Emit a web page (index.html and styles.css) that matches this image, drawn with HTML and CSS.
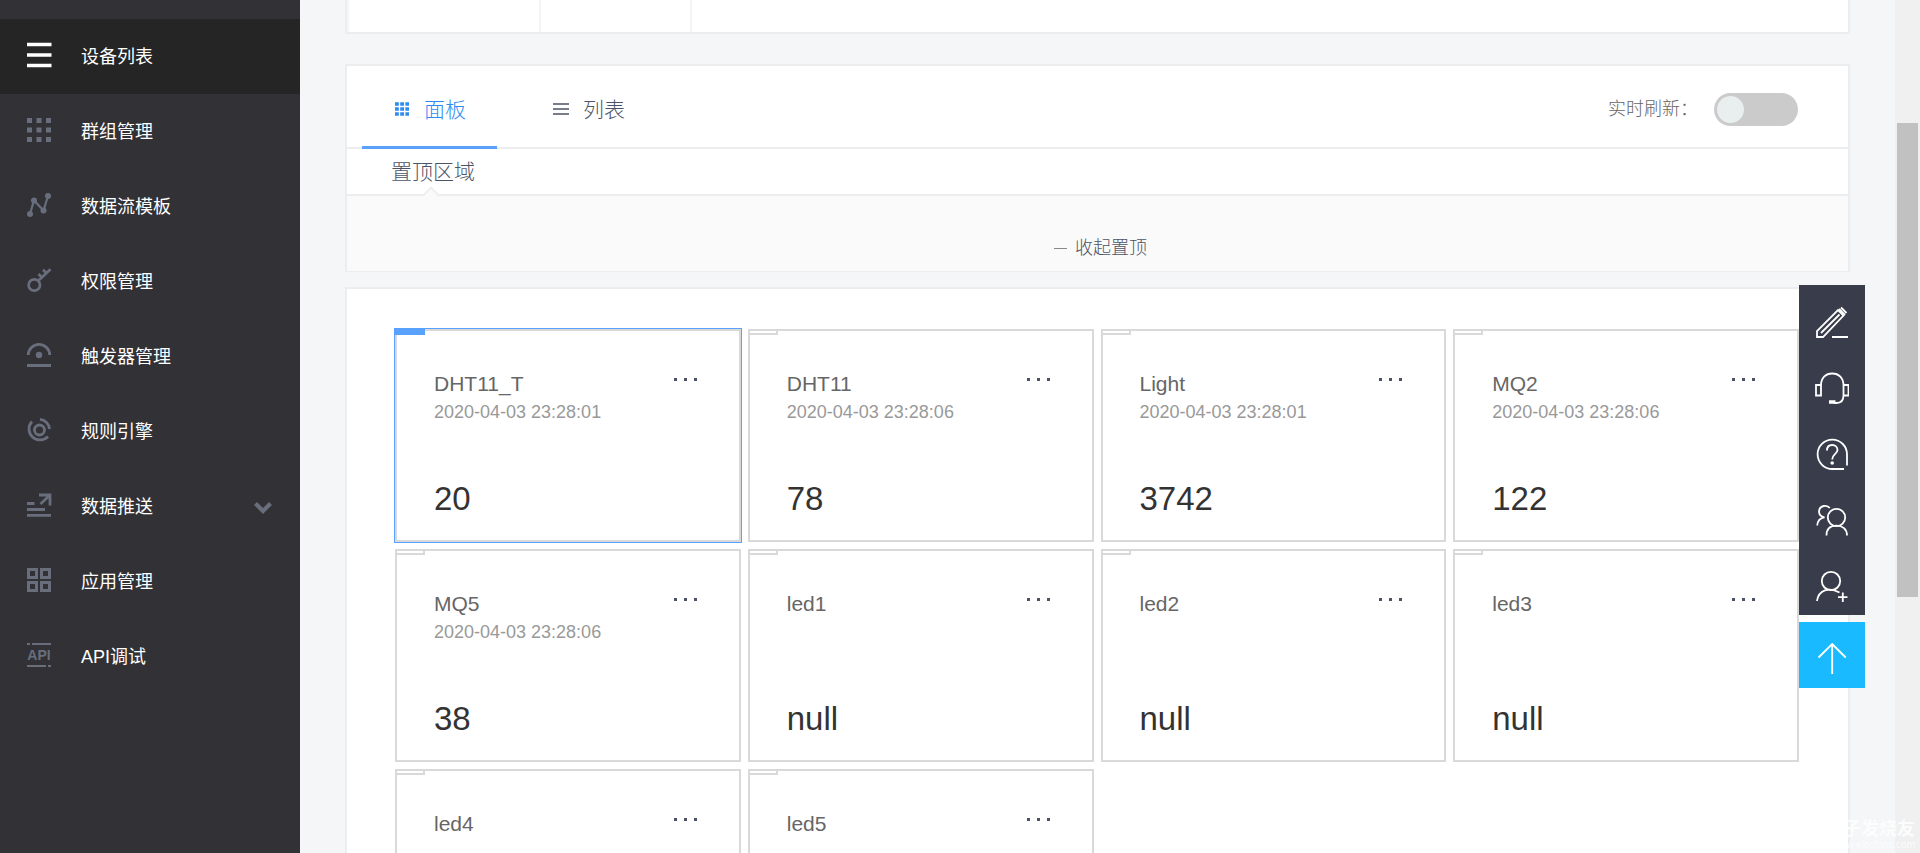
FILE: index.html
```
<!DOCTYPE html>
<html lang="zh-CN">
<head>
<meta charset="utf-8">
<title>设备列表</title>
<link rel="stylesheet" href="styles.css">
</head>
<body>
<div class="app">
  <nav class="sidebar">
    <a class="nav-item active" href="#"><svg class="nav-icon" viewBox="0 0 24 24"><path d="M0 1.500h24.500M0 12h24.500M0 22.500h24.500" stroke="currentColor" stroke-width="3.400"/></svg><span>设备列表</span></a>
    <a class="nav-item" href="#"><svg class="nav-icon" viewBox="0 0 24 24"><path d="M0 2.500h24M0 12h24M0 21.500h24" stroke="currentColor" stroke-width="5" stroke-dasharray="5 4.500"/></svg><span>群组管理</span></a>
    <a class="nav-item" href="#"><svg class="nav-icon" viewBox="0 0 24 24"><path d="M3 21L7 7.500L16.500 17.500L21 3" fill="none" stroke="currentColor" stroke-width="2.200"/><g fill="currentColor"><circle cx="3" cy="21" r="3"/><circle cx="7" cy="7.500" r="3"/><circle cx="16.500" cy="17.500" r="3"/><circle cx="21" cy="3" r="3"/></g></svg><span>数据流模板</span></a>
    <a class="nav-item" href="#"><svg class="nav-icon" viewBox="0 0 24 24"><g fill="none" stroke="currentColor" stroke-width="2.700"><circle cx="7.300" cy="17" r="5.700"/><path d="M11 13L23.500 1.200M16 1.800l4 4M11.500 6l4 4"/></g></svg><span>权限管理</span></a>
    <a class="nav-item" href="#"><svg class="nav-icon" viewBox="0 0 24 24"><path d="M1.300 12a10.700 10.700 0 0 1 21.400 0M0 22.500h24" fill="none" stroke="currentColor" stroke-width="2.800"/><circle cx="12" cy="12" r="3.200" fill="currentColor"/></svg><span>触发器管理</span></a>
    <a class="nav-item" href="#"><svg class="nav-icon" viewBox="0 0 24 24"><g fill="none" stroke="currentColor" stroke-width="2.800"><circle cx="12.500" cy="12" r="5"/><path d="M13 1.400A10.600 10.600 0 0 1 22.600 11M21 18.500A10.600 10.600 0 1 1 5 3.500"/></g></svg><span>规则引擎</span></a>
    <a class="nav-item" href="#"><svg class="nav-icon" viewBox="0 0 24 24"><path d="M0 10.500h7.500M0 16.500h18M0 22.300h24M12 2h11v10.500M22.500 2.500L13.500 11" fill="none" stroke="currentColor" stroke-width="2.800"/></svg><span>数据推送</span><svg class="nav-chevron" viewBox="0 0 18 12"><path d="M1.500 1.500L9 9l7.500-7.500" fill="none" stroke="currentColor" stroke-width="4.200"/></svg></a>
    <a class="nav-item" href="#"><svg class="nav-icon" viewBox="0 0 24 24"><path d="M1.500 1.500h8v8h-8zM14.500 1.500h8v8h-8zM1.500 14.500h8v8h-8zM14.500 14.500h8v8h-8z" fill="none" stroke="currentColor" stroke-width="3"/></svg><span>应用管理</span></a>
    <a class="nav-item" href="#"><svg class="nav-icon" viewBox="0 0 24 24"><path d="M0 1h3M5 1h19M0 23h19M21 23h3" stroke="currentColor" stroke-width="1.800"/><text class="api-mark" x="12" y="17">API</text></svg><span>API调试</span></a>
  </nav>

  <main class="content">
    <section class="panel summary"><div class="summary-a"></div><div class="summary-b"></div></section>

    <section class="panel board">
      <header class="tabs">
        <button class="tab selected" type="button"><svg class="tab-icon" viewBox="0 0 16 16"><path d="M1 3h14M1 8h14M1 13h14" stroke="currentColor" stroke-width="3.600" stroke-dasharray="3.800 1.400"/></svg>面板</button>
        <button class="tab" type="button"><svg class="tab-icon" viewBox="0 0 16 16"><path d="M0 3h16M0 8h16M0 13h16" stroke="currentColor" stroke-width="1.600"/></svg>列表</button>
        <label class="refresh">实时刷新：<input class="switch" type="checkbox"></label>
      </header>
      <h2 class="pinned-title">置顶区域</h2>
      <div class="pinned">
        <button class="collapse" type="button"><span class="minus"></span>收起置顶</button>
      </div>
    </section>

    <section class="panel cards">
      <article class="card current"><h3>DHT11_T</h3><button class="more" type="button" aria-label="更多"><i></i><i></i><i></i></button><time>2020-04-03 23:28:01</time><p>20</p></article>
      <article class="card"><h3>DHT11</h3><button class="more" type="button" aria-label="更多"><i></i><i></i><i></i></button><time>2020-04-03 23:28:06</time><p>78</p></article>
      <article class="card"><h3>Light</h3><button class="more" type="button" aria-label="更多"><i></i><i></i><i></i></button><time>2020-04-03 23:28:01</time><p>3742</p></article>
      <article class="card"><h3>MQ2</h3><button class="more" type="button" aria-label="更多"><i></i><i></i><i></i></button><time>2020-04-03 23:28:06</time><p>122</p></article>
      <article class="card"><h3>MQ5</h3><button class="more" type="button" aria-label="更多"><i></i><i></i><i></i></button><time>2020-04-03 23:28:06</time><p>38</p></article>
      <article class="card"><h3>led1</h3><button class="more" type="button" aria-label="更多"><i></i><i></i><i></i></button><time></time><p>null</p></article>
      <article class="card"><h3>led2</h3><button class="more" type="button" aria-label="更多"><i></i><i></i><i></i></button><time></time><p>null</p></article>
      <article class="card"><h3>led3</h3><button class="more" type="button" aria-label="更多"><i></i><i></i><i></i></button><time></time><p>null</p></article>
      <article class="card"><h3>led4</h3><button class="more" type="button" aria-label="更多"><i></i><i></i><i></i></button></article>
      <article class="card"><h3>led5</h3><button class="more" type="button" aria-label="更多"><i></i><i></i><i></i></button></article>
    </section>
  </main>

  <div class="scrollbar"><div class="thumb"></div></div>

  <aside class="tools">
    <button class="tool" type="button" aria-label="反馈"><svg viewBox="0 0 34 34"><path d="M2 31v-6L23 4l5.500 5.500L8 31zM6 27L24.500 8.500M17 31h16" /><path d="M24 3l6 6M26 1.500l5.500 5.500" /></svg></button>
    <button class="tool" type="button" aria-label="客服"><svg viewBox="0 0 34 34"><path d="M1 13h5v10.500H1zM28.500 13h5v10.500h-5zM6 13.500C6 6 10.500 1.500 17.200 1.500S28.500 6 28.500 13.500M28.500 23.500c0 5-2.500 7.500-7 7.500h-3"/><path d="M14 30h6.500" stroke-width="3.500"/></svg></button>
    <button class="tool" type="button" aria-label="帮助"><svg viewBox="0 0 34 34"><path d="M29 31H17.500A14.700 14.700 0 1 1 32 16.500V27.500M12 12.500c0-3.500 2.200-5.500 5.200-5.500s5.300 2 5.300 5c0 4-5.300 4-5.300 9.500"/><circle class="dot" cx="17.200" cy="25" r="1.800"/></svg></button>
    <button class="tool" type="button" aria-label="社区"><svg viewBox="0 0 34 34"><circle cx="21.500" cy="13.500" r="8.700"/><path d="M11.500 31.500c0-6.500 4-9.800 10-9.800s10.500 3.300 10.500 9.800M14.800 4C12 .500 4.500 1 4 7.500c0 3 1.500 5 5.500 5.800C5 14 2.500 17 2.200 21.500"/></svg></button>
    <button class="tool" type="button" aria-label="注册"><svg viewBox="0 0 34 34"><circle cx="16" cy="11" r="9.200"/><path d="M2 31C3.500 20 14 16.500 24.500 22.500M27.800 22.500v9.500M23 27.200h9.500"/></svg></button>
    <button class="tool to-top" type="button" aria-label="返回顶部"><svg viewBox="0 0 34 34"><path d="M17.200 31V1M3.500 14.500L17.200 1l13.500 13.500"/></svg></button>
  </aside>

  <div class="watermark"><strong>电子发烧友</strong><span>www.elecfans.com</span></div>
</div>
</body>
</html>
```
FILE: styles.css
```
*, *::before { box-sizing: border-box; }
body {
  margin: 0;
  background: #f4f6f8;
  color: #666;
  font-family: "Liberation Sans", "Noto Sans CJK SC", sans-serif;
}
h2, h3, p { margin: 0; font-weight: 400; }
button {
  padding: 0;
  border: 0;
  background: none;
  color: inherit;
  font: inherit;
}
.app {
  position: relative;
  display: flex;
  height: 100vh;
  overflow: hidden;
}

.sidebar {
  flex: 0 0 300px;
  padding-top: 19px;
  background: #323136;
}
.nav-item {
  display: flex;
  align-items: center;
  height: 75px;
  padding: 0 28px 4px 27px;
  color: #fff;
  font-size: 18px;
  text-decoration: none;
}
.nav-item.active { background: #252525; }
.nav-icon {
  width: 24px;
  height: 24px;
  margin-right: 30px;
  overflow: visible;
  color: #686e7c;
}
.active .nav-icon { color: #fff; }
.nav-chevron {
  width: 18px;
  height: 12px;
  margin-top: 7px;
  margin-left: auto;
  color: #686e7c;
}
.api-mark {
  fill: currentColor;
  font: bold 14px "Liberation Sans", sans-serif;
  text-anchor: middle;
}

.content {
  flex: 1;
  min-width: 0;
  padding: 0 45px;
}
.panel {
  border: 2px solid #ecedef;
  background: #fff;
}
.summary {
  display: flex;
  height: 34px;
  margin-bottom: 30px;
  border-top: 0;
}
.summary-a { width: 194px; border: solid #f4f5f8; border-width: 0 2px; }
.summary-b { width: 151px; border-right: 2px solid #f4f5f8; }

.board { margin-bottom: 15px; border-bottom-width: 1px; }
.tabs {
  display: flex;
  height: 83px;
  padding: 0 50px 0 15px;
  border-bottom: 2px solid #ecedef;
}
.tab {
  display: flex;
  align-items: center;
  height: 83px;
  margin-right: 24px;
  padding: 3px 31px 0 32px;
  border-bottom: 3px solid transparent;
  color: #4c5366;
  font-size: 21px;
  font-weight: 300;
}
.tab.selected { border-color: #58a1fc; color: #2d8cf0; }
.tab-icon {
  width: 16px;
  height: 16px;
  margin: 3px 14px 0 0;
}
.refresh {
  display: flex;
  align-items: center;
  gap: 16px;
  margin-left: auto;
  font-size: 18px;
  font-weight: 300;
}
.switch {
  appearance: none;
  width: 84px;
  height: 33px;
  margin: 6px 0 0;
  padding: 3px;
  border-radius: 17px;
  background: #cbcbcb;
}
.switch::before {
  content: "";
  display: block;
  width: 27px;
  height: 27px;
  border-radius: 50%;
  background: #e9eeee;
}
.pinned-title {
  height: 45px;
  padding-left: 44px;
  color: #4c5366;
  font-size: 21px;
  font-weight: 300;
  line-height: 45px;
}
.pinned {
  position: relative;
  display: flex;
  justify-content: center;
  padding: 38px 0 8px 6px;
  border-top: 2px solid #ecedef;
  background: #fafafa;
}
.pinned::before {
  content: "";
  position: absolute;
  top: -7px;
  left: 77px;
  width: 14px;
  height: 14px;
  border: solid #ecedef;
  border-width: 2px 0 0 2px;
  background: #fafafa;
  transform: rotate(45deg);
  clip-path: polygon(0 0, 100% 0, 0 100%);
}
.collapse {
  display: flex;
  align-items: center;
  gap: 8px;
  color: #4c5366;
  font-size: 18px;
  font-weight: 300;
  line-height: 29px;
}
.minus { width: 13px; height: 1px; background: #888; }

.cards {
  display: grid;
  grid-template-columns: repeat(4, 1fr);
  gap: 7px;
  padding: 40px 49px 40px 48px;
}
.card {
  position: relative;
  display: grid;
  grid-template-columns: 1fr auto;
  grid-template-rows: 30px 25px 1fr;
  align-content: start;
  height: 213px;
  padding: 37px 40px 23px 37px;
  border: 2px solid #d9d9d9;
}
.card::before {
  content: "";
  position: absolute;
  top: -2px;
  left: -2px;
  width: 30px;
  height: 6px;
  border: 2px solid #d9d9d9;
}
.card.current { outline: 1px solid #58a1fc; }
.card.current::before {
  top: -3px;
  left: -3px;
  width: 31px;
  height: 7px;
  border: 0;
  background: #58a1fc;
}
.card h3 { font-size: 21px; line-height: 32px; }
.card time {
  grid-column: 1 / -1;
  color: #999;
  font-size: 18px;
  line-height: 28px;
}
.card p {
  grid-column: 1 / -1;
  align-self: end;
  color: #333;
  font-size: 33px;
  line-height: 36px;
}
.more {
  display: flex;
  align-self: start;
  gap: 7px;
  padding: 10px 2px;
}
.more i { width: 3px; height: 3px; background: #4c5366; }

.scrollbar {
  flex: 0 0 25px;
  padding: 123px 2px 0;
  background: #f0f0f0;
}
.thumb { height: 474px; background: #c1c1c1; }

.tools {
  position: absolute;
  top: 285px;
  right: 55px;
  display: flex;
  flex-direction: column;
}
.tool {
  display: grid;
  place-items: center;
  width: 66px;
  height: 66px;
  background: #393d4b;
}
.tool svg {
  width: 34px;
  height: 34px;
  margin-top: 9px;
  fill: none;
  stroke: #fff;
  stroke-width: 1.8px;
}
.tool svg .dot { fill: #fff; stroke: none; }
.tool.to-top { margin-top: 7px; background: #19baff; }

.watermark {
  position: absolute;
  right: 5px;
  bottom: 2px;
  display: flex;
  flex-direction: column;
  align-items: flex-end;
  color: #fff;
  font-size: 10px;
  line-height: 12px;
  opacity: 0.8;
}
.watermark strong { font-size: 18px; line-height: 20px; }
```
